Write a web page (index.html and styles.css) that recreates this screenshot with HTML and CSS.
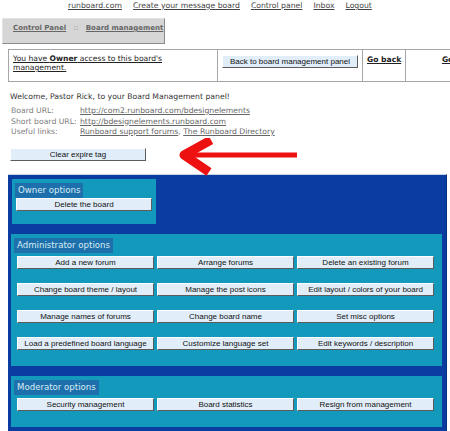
FILE: index.html
```html
<!DOCTYPE html>
<html lang="en">
  <head>
    <meta charset="UTF-8" />
    <title>Board management</title>
    <link rel="stylesheet" href="styles.css">
  </head>
  <body>
    <div class="topnav">
      <a href="#">runboard.com</a>
      <a href="#">Create your message board</a>
      <a href="#">Control panel</a>
      <a href="#">Inbox</a>
      <a href="#">Logout</a>
    </div>

    <div class="crumbs">
      <a href="#">Control Panel</a>
      <span class="sep">::</span>
      <a href="#">Board management</a>
    </div>

    <div class="access-wrap">
      <table class="access">
        <tr>
          <td class="col-info"><a href="#">You have <b>Owner</b> access to this board's<br>management.</a></td>
          <td class="col-back"><button class="btn back">Back to board management panel</button></td>
          <td class="col-go"><a href="#"><b>Go back</b></a></td>
          <td class="col-more"><a href="#"><b>Go</b></a></td>
        </tr>
      </table>
    </div>

    <p class="welcome">Welcome, Pastor Rick, to your Board Management panel!</p>

    <div class="info">
      <span class="label">Board URL:</span>
      <span><a href="#">http://com2.runboard.com/bdesignelements</a></span>
      <span class="label">Short board URL:</span>
      <span><a href="#">http://bdesignelements.runboard.com</a></span>
      <span class="label">Useful links:</span>
      <span><a href="#">Runboard support forums</a>, <a href="#">The Runboard Directory</a></span>
    </div>

    <button class="btn expire">Clear expire tag</button>

    <!-- red pointer drawn over the page -->
    <svg class="arrow" width="130" height="46" viewBox="0 0 130 46">
      <line x1="8" y1="17" x2="121" y2="17" stroke="#ee1111" stroke-width="5" />
      <polyline points="35,2 8,17 33,34" fill="none" stroke="#ee1111" stroke-width="9" stroke-linejoin="round" />
    </svg>

    <div class="options">
      <section class="panel owner">
        <h3>Owner options</h3>
        <div class="grid">
          <button class="btn">Delete the board</button>
        </div>
      </section>

      <section class="panel">
        <h3>Administrator options</h3>
        <div class="grid">
          <button class="btn">Add a new forum</button>
          <button class="btn">Arrange forums</button>
          <button class="btn">Delete an existing forum</button>
          <button class="btn">Change board theme / layout</button>
          <button class="btn">Manage the post icons</button>
          <button class="btn">Edit layout / colors of your board</button>
          <button class="btn">Manage names of forums</button>
          <button class="btn">Change board name</button>
          <button class="btn">Set misc options</button>
          <button class="btn">Load a predefined board language</button>
          <button class="btn">Customize language set</button>
          <button class="btn">Edit keywords / description</button>
        </div>
      </section>

      <section class="panel last">
        <h3>Moderator options</h3>
        <div class="grid">
          <button class="btn">Security management</button>
          <button class="btn">Board statistics</button>
          <button class="btn">Resign from management</button>
        </div>
      </section>
    </div>
  </body>
</html>
```

FILE: styles.css
```css
html, body {
    margin: 0;
    padding: 0;
    overflow: hidden;
    background-color: #ffffff;
}

body {
    position: relative;
    font-family: "DejaVu Sans", Verdana, sans-serif;
    font-size: 7.7px;
    color: #333;
}

a {
    color: inherit;
}

.topnav {
    display: flex;
    gap: 11px;
    height: 12px;
    line-height: 12px;
    padding-left: 68px;
}

.topnav a {
    color: #444;
}

.crumbs {
    box-sizing: border-box;
    width: 163px;
    height: 26px;
    margin: 6px 0 0 2px;
    padding: 4px 0 0 10px;
    font-size: 7px;
    line-height: 10px;
    background-color: #d6d6d6;
    border: 1px solid #e4e4e4;
    border-right-color: #8a8a8a;
    border-bottom-color: #8a8a8a;
    font-weight: bold;
    color: #666;
}

.crumbs .sep {
    margin: 0 5px;
    font-weight: normal;
}

.access-wrap {
    overflow: hidden;
    margin: 5px 0 0 8px;
}

.access {
    width: 482px;
    border-collapse: collapse;
    border: 1px solid #a6a6a6;
}

.access td {
    height: 22px;
    padding: 4px 4px 5px 4px;
    vertical-align: top;
    line-height: 9px;
    font-size: 7.6px;
    border: 1px solid #a6a6a6;
    color: #222;
    white-space: nowrap;
}

.col-info {
    width: 200px;
}

.col-back {
    width: 136px;
}

.col-go {
    width: 31px;
}

.col-more {
    text-align: center;
}

.col-go a, .col-more a {
    display: inline-block;
    margin-top: 1px;
}

.welcome {
    margin: 9px 0 0 10px;
    line-height: 12px;
    color: #333;
}

.info {
    display: grid;
    grid-template-columns: 69px auto;
    margin: 3px 0 0 11px;
    line-height: 10.5px;
    color: #808080;
}

.info a {
    color: #666;
}

.btn {
    box-sizing: border-box;
    display: block;
    height: 13px;
    margin: 0;
    padding: 0;
    font-family: "Liberation Sans", Arial, sans-serif;
    font-size: 8px;
    line-height: 11px;
    color: #111;
    background-color: #e1eef9;
    border: 1px solid #ffffff;
    border-right-color: #5c5c5c;
    border-bottom-color: #5c5c5c;
    text-align: center;
    white-space: nowrap;
}

.back {
    width: 136px;
    margin-top: 1px;
}

.expire {
    width: 136px;
    margin: 10px 0 0 10px;
}

.arrow {
    position: absolute;
    left: 176px;
    top: 138px;
}

.options {
    width: 439px;
    box-sizing: border-box;
    margin: 13px 0 0 8px;
    padding: 4px 4px 5px 3px;
    background-color: #0b3c9f;
    border-top: 1px solid #c9d3e6;
    border-right: 1px solid #08307f;
}

.panel {
    padding: 4px 6px 16px 3px;
    margin-bottom: 10px;
    background-color: #1299bb;
}

.panel.last {
    margin-bottom: 0;
}

.panel.owner {
    box-sizing: border-box;
    width: 144px;
    margin-left: 1px;
    padding-bottom: 13px;
}

.panel h3 {
    display: inline-block;
    margin: 0;
    padding: 0 3px;
    height: 15px;
    line-height: 15px;
    font-size: 8.6px;
    font-weight: normal;
    color: #d9ecf4;
    background-color: #1d70ab;
}

.grid {
    display: grid;
    grid-template-columns: repeat(3, 137px);
    column-gap: 3px;
    row-gap: 14px;
    margin: 3px 0 0 3px;
}

.owner .grid {
    grid-template-columns: 136px;
    margin: 0 0 0 1px;
}
```
